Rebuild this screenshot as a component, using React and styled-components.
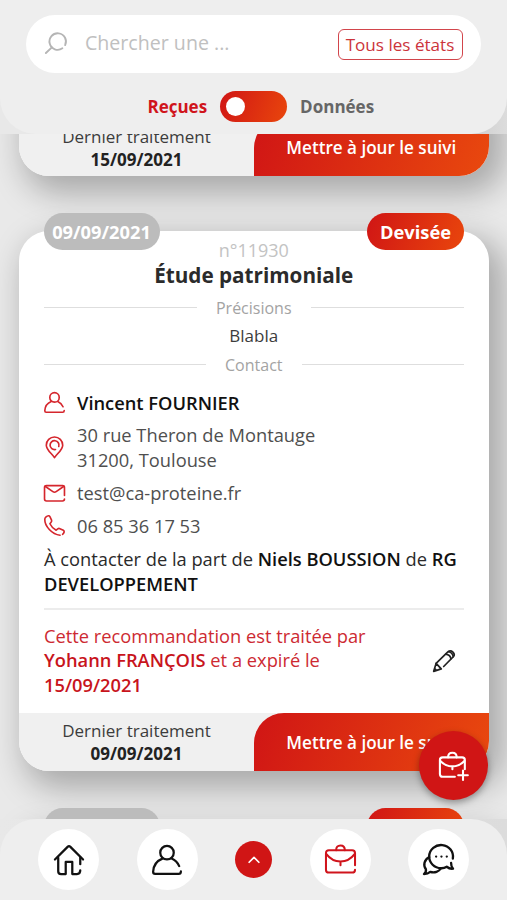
import React, { useState } from 'react'
import styled, { createGlobalStyle } from 'styled-components';

const GlobalStyle = createGlobalStyle`
  * {
    box-sizing: border-box;
  }

  body {
    margin: 0;
    font-family: "Open Sans", "Noto Sans", sans-serif;
    color: #3c3c3c;
  }

  button, input {
    font-family: inherit;
    border: 0;
    padding: 0;
    margin: 0;
    background: none;
  }
`;

const Screen = styled.div`
  position: relative;
  display: flex;
  flex-direction: column;
  width: 507px;
  height: 900px;
  overflow: hidden;
  background: #e9e9e9;
`;

/* ~~~ header ~~~ */
const HeaderArea = styled.div`
  flex: none;
  height: 134px;
  background: linear-gradient(90deg, #e8e8e8 50%, #d0d0d0 94%, #dcdcdc);
`;

const Header = styled.header`
  height: 100%;
  padding: 15px 26px 0;
  background: #eeeeee;
  border-radius: 0 0 36px 36px;
`;

const SearchBar = styled.div`
  display: flex;
  align-items: center;
  height: 58px;
  padding: 0 18px;
  border-radius: 29px;
  background: #fff;
`;

const SearchInput = styled.input`
  flex: 1;
  min-width: 0;
  margin: -3px 0 0 17px;
  font-size: 19.6px;
  outline: none;

  &::placeholder {
    color: #c0c0c0;
    opacity: 1;
  }
`;

const StateFilter = styled.button`
  width: 125px;
  height: 31px;
  padding-right: 1px;
  border: 1.5px solid #d2454b;
  border-radius: 6px;
  font-size: 17.1px;
  color: #cc343b;
  white-space: nowrap;
`;

const SwitchRow = styled.div`
  display: flex;
  align-items: center;
  justify-content: center;
  gap: 13px;
  height: 31px;
  margin-top: 18px;
  padding-left: 14.5px;
`;

const SwitchLabel = styled.span`
  font-size: 17px;
  font-weight: 700;
  color: ${({ $active }) => ($active ? '#d0141c' : '#666')};
`;

const Switch = styled.button`
  display: flex;
  align-items: center;
  justify-content: ${({ $on }) => ($on ? 'flex-end' : 'flex-start')};
  width: 67px;
  height: 31px;
  padding: 0 6px;
  border-radius: 16px;
  background: linear-gradient(110deg, #d01515, #e9460c);
`;

const Knob = styled.span`
  width: 19px;
  height: 19px;
  border-radius: 50%;
  background: #fff;
`;

/* ~~~ cards ~~~ */
const List = styled.main`
  flex: 1;
  min-height: 0;
  display: flex;
  flex-direction: column;
  gap: 55px;
  padding: 0 18.5px 0 19px;
  overflow: hidden;
`;

const Card = styled.article`
  flex: none;
  border-radius: 30px;
  background: #fff;
  box-shadow: 10px 12px 32px 5px rgba(0, 0, 0, 0.28);

  &:first-child {
    margin-top: -78px;
    padding-top: 62px;
  }
`;

const BadgeRow = styled.div`
  display: flex;
  justify-content: space-between;
  height: 37px;
  margin: -18px 0 -12.5px;
  padding: 0 24.5px;
`;

const Badge = styled.span`
  width: ${({ $state }) => ($state ? '97px' : '116px')};
  border-radius: 19px;
  background: ${({ $state }) => ($state ? 'linear-gradient(110deg, #d01515, #e9460c)' : '#bcbcbc')};
  color: #fff;
  font-size: 18.3px;
  font-weight: 700;
  line-height: 38px;
  text-align: center;
`;

const CardBody = styled.div`
  padding: 0 25px 15px;
  font-size: 18.3px;
  line-height: 24.6px;
`;

const Reference = styled.div`
  font-size: 18px;
  color: #c3c3c3;
  text-align: center;
`;

const Title = styled.h2`
  margin: 0 0 6.5px;
  font-size: 20.7px;
  font-weight: 700;
  line-height: 27px;
  color: #2b2b2b;
  text-align: center;
`;

const Divider = styled.div`
  display: flex;
  align-items: center;
  gap: 19px;
  font-size: 16px;
  line-height: 24px;
  color: #a3a3a3;

  &::before,
  &::after {
    content: '';
    flex: 1;
    height: 1px;
    background: #dedede;
  }
`;

const Details = styled.p`
  margin: 4.5px 0 4.5px;
  font-size: 17px;
  line-height: 24px;
  text-align: center;
`;

const Contact = styled.div`
  display: grid;
  gap: 8.2px;
  margin-top: 14px;
`;

const ContactRow = styled.div`
  display: flex;
  align-items: center;
  gap: 12px;
  color: ${({ $strong }) => ($strong ? '#111' : '#4f4f4f')};
  font-weight: ${({ $strong }) => ($strong ? 600 : 400)};
`;

const Sender = styled.p`
  margin: 9px 0 11.5px;
  color: #2a2a2a;
  white-space: nowrap;

  b {
    font-weight: 600;
    color: #111;
  }
`;

const Status = styled.div`
  display: flex;
  align-items: center;
  justify-content: space-between;
  padding: 14px 9px 0 0;
  border-top: 2px solid #ececec;
  color: #cd2a32;

  p {
    width: 345px;
    margin: 0;
  }

  b {
    font-weight: 600;
    color: #c8141c;
  }
`;

const CardFooter = styled.footer`
  display: flex;
  height: 58px;
  border-radius: 0 0 30px 30px;
  background: #f0f0f0;
  overflow: hidden;
`;

const LastUpdate = styled.div`
  width: 235px;
  padding-top: 6.5px;
  font-size: 17px;
  line-height: 23px;
  text-align: center;

  b {
    display: block;
    font-weight: 700;
    color: #222;
  }
`;

const FollowButton = styled.button`
  flex: 1;
  padding-top: 1px;
  border-radius: 30px 0 0 0;
  background: linear-gradient(110deg, #d01515, #e9490e);
  color: #fff;
  font-size: 17.1px;
  font-weight: 600;
`;

/* ~~~ bottom bar ~~~ */
const NavArea = styled.div`
  flex: none;
  height: 81px;
  background: linear-gradient(90deg, #e8e8e8, #dcdcdc);
`;

const Nav = styled.nav`
  display: flex;
  align-items: center;
  justify-content: space-between;
  height: 100%;
  padding: 0 38px;
  background: #eeeeee;
  border-radius: 36px 36px 0 0;
`;

const NavButton = styled.button`
  display: grid;
  place-items: center;
  width: ${({ $small }) => ($small ? '37px' : '61px')};
  height: ${({ $small }) => ($small ? '37px' : '61px')};
  border-radius: 50%;
  background: ${({ $small }) => ($small ? '#d01515' : '#fff')};
  color: ${({ $small, $active }) => ($small ? '#fff' : $active ? '#d0141c' : '#111')};
`;

const AddButton = styled.button`
  position: absolute;
  left: 419px;
  top: 731px;
  display: grid;
  place-items: center;
  width: 69px;
  height: 69px;
  border-radius: 50%;
  background: #d01515;
  color: #fff;
  box-shadow: 0 3px 7px rgba(0, 0, 0, 0.35);
`;

const Svg = styled.svg`
  display: block;
  flex: none;
  overflow: visible;
  fill: none;
  stroke: currentColor;
  stroke-linecap: round;
  stroke-linejoin: round;
`;

const Icon = ({ size = 32, weight = 2, color, children }) => (
  <Svg width={size} height={size} viewBox="0 0 32 32" strokeWidth={weight} color={color}>
    {children}
  </Svg>
)

const SearchIcon = () => (
  <Icon size={24} weight={2.5} color="#b5b5b5">
    <path d="M28.200 17.500A11 11 0 1 0 24.500 21.800" />
    <path d="M10.500 20.500L2.500 28" />
  </Icon>
)

const UserIcon = (props) => (
  <Icon {...props}>
    <circle cx="16" cy="8.200" r="7.200" />
    <path d="M11 14.500C5 17 1.500 22 1.200 28.500Q1.200 30.800 3.300 30.800H28.500Q30.800 30.800 30.800 28.200" />
    <path d="M21 14.500Q26.500 17 29 22.500" />
  </Icon>
)

const PinIcon = (props) => (
  <Icon {...props}>
    <path d="M16 31.500C12.500 25.500 3.500 20 3.500 12.500A12.500 12.500 0 0 1 28.500 12.500C28.500 20 19.500 25.500 16 31.500Z" />
    <path d="M22.500 14.500A6.800 6.800 0 1 0 17.500 19" />
  </Icon>
)

const MailIcon = (props) => (
  <Icon {...props}>
    <path d="M31.200 19V7Q31.200 4 28.200 4H3.800Q0.800 4 0.800 7V24.500Q0.800 27.500 3.800 27.500H28.200Q31.200 27.500 31.200 24.500" />
    <path d="M1.600 5L13.500 13.200Q16 15 18.500 13.200L30.400 5" />
  </Icon>
)

const PhoneIcon = (props) => (
  <Icon {...props}>
    <path d="M24.500 30.800C12 29.500 1 17 1.200 6.500C1.200 4 4.500 1.500 6.800 1.200Q8.200 1 9 2.500L11.500 7.800Q12.200 9.500 10.800 11L9 13.300C11 17.500 14.500 21 18.500 23.200L21 21.200Q22.500 20 24.200 20.800L29.500 23.200Q31.200 24.200 30.700 26Q30.200 28 28.300 29.500" />
  </Icon>
)

const PencilIcon = () => (
  <Icon size={22} weight={2.5} color="#222">
    <path d="M4.500 19.500L22 2.500Q25.500 -0.300 29 3Q32.500 6.500 29.500 9.800L15.500 24" />
    <path d="M4.500 19.500L1 31L12 27.500M4.500 19.500L12 27.500M2.500 27L5 29.600" />
    <path d="M18.500 6Q25.500 7 26 13M23 2.500Q28.500 4 29.500 9.800" />
  </Icon>
)

const HomeIcon = (props) => (
  <Icon {...props}>
    <path d="M1 15.500L14.500 2Q16 0.500 17.500 2L31 15.500" />
    <path d="M4.500 13.500V28Q4.500 31 7.500 31H12.500V18H19.500V31H24.500Q28 31 28 27" />
    <path d="M28 13.500V20.500" />
  </Icon>
)

const BriefcaseIcon = ({ plus, ...props }) => (
  <Icon {...props}>
    <path d={plus
      ? 'M17.500 28.500H4Q1 28.500 1 25.500V10Q1 7 4 7H25.500Q28.500 7 28.500 10V20'
      : 'M31 22V9.500Q31 6.500 28 6.500H4Q1 6.500 1 9.500V26.500Q1 29.500 4 29.500H28Q31 29.500 31 26.500'}
    />
    {plus
      ? <path d="M10 7Q10 2 14.800 2T19.500 7M1.500 11Q7 17 14.800 17T28 11M14.800 17V20M26.500 21.500V32M21.200 26.800H31.800" />
      : <path d="M11.500 6.500Q11.500 1.500 16 1.500T20.500 6.500M1.500 10.500Q7 18 16 18T30.500 10.500M16 18V22" />}
  </Icon>
)

const ChatIcon = (props) => (
  <Icon {...props}>
    <path d="M30.800 15A12.300 12 0 1 0 19 25Q22 25 24.500 23.500Q27.500 26 31 25.500Q28.800 22.800 29 19.500" />
    <path d="M6.500 13.500C1 16.500 0 22 3 26Q3.500 28.800 1 31Q5 31 7.500 28.800C12 30.300 16.500 28.500 18.500 25" />
    <path d="M13.500 13H13.600M19 13H19.100M24.500 13H24.600" strokeWidth="2.300" />
  </Icon>
)

const Footer = ({ date }) => (
  <CardFooter>
    <LastUpdate>
      Dernier traitement
      <b>{date}</b>
    </LastUpdate>
    <FollowButton>Mettre à jour le suivi</FollowButton>
  </CardFooter>
)

const CardBadges = ({ date, state }) => (
  <BadgeRow>
    <Badge>{date}</Badge>
    <Badge $state>{state}</Badge>
  </BadgeRow>
)

export default function App() {
  const [given, setGiven] = useState(false);

  return (
    <>
      <GlobalStyle />
      <Screen>
        <HeaderArea>
          <Header>
            <SearchBar>
              <SearchIcon />
              <SearchInput placeholder="Chercher une ..." />
              <StateFilter>Tous les états</StateFilter>
            </SearchBar>
            <SwitchRow>
              <SwitchLabel $active={!given}>Reçues</SwitchLabel>
              <Switch $on={given} onClick={() => setGiven(!given)}>
                <Knob />
              </Switch>
              <SwitchLabel $active={given}>Données</SwitchLabel>
            </SwitchRow>
          </Header>
        </HeaderArea>

        <List>
          <Card>
            <Footer date="15/09/2021" />
          </Card>

          <Card>
            <CardBadges date="09/09/2021" state="Devisée" />
            <CardBody>
              <Reference>n°11930</Reference>
              <Title>Étude patrimoniale</Title>
              <Divider>Précisions</Divider>
              <Details>Blabla</Details>
              <Divider>Contact</Divider>
              <Contact>
                <ContactRow $strong>
                  <UserIcon size={21} weight={2.5} color="#d5262d" />
                  Vincent FOURNIER
                </ContactRow>
                <ContactRow>
                  <PinIcon size={21} weight={2.5} color="#d5262d" />
                  <div>30 rue Theron de Montauge<br />31200, Toulouse</div>
                </ContactRow>
                <ContactRow>
                  <MailIcon size={21} weight={2.5} color="#d5262d" />
                  test@ca-proteine.fr
                </ContactRow>
                <ContactRow>
                  <PhoneIcon size={21} weight={2.5} color="#d5262d" />
                  06 85 36 17 53
                </ContactRow>
              </Contact>
              <Sender>
                À contacter de la part de <b>Niels BOUSSION</b> de <b>RG<br />DEVELOPPEMENT</b>
              </Sender>
              <Status>
                <p>
                  Cette recommandation est traitée par <b>Yohann FRANÇOIS</b> et a expiré le <b>15/09/2021</b>
                </p>
                <PencilIcon />
              </Status>
            </CardBody>
            <Footer date="09/09/2021" />
          </Card>

          <Card>
            <CardBadges date="" state="" />
            <CardBody />
          </Card>
        </List>

        <NavArea>
          <Nav>
            <NavButton><HomeIcon size={30} weight={2.4} /></NavButton>
            <NavButton><UserIcon size={30} weight={2.4} /></NavButton>
            <NavButton $small>
              <Icon size={12} weight={4.5}><path d="M3 22L16 9L29 22" /></Icon>
            </NavButton>
            <NavButton $active><BriefcaseIcon size={31} weight={2.1} /></NavButton>
            <NavButton><ChatIcon size={31} weight={2.4} /></NavButton>
          </Nav>
        </NavArea>

        <AddButton>
          <BriefcaseIcon plus size={29} weight={2.3} />
        </AddButton>
      </Screen>
    </>
  )
}
